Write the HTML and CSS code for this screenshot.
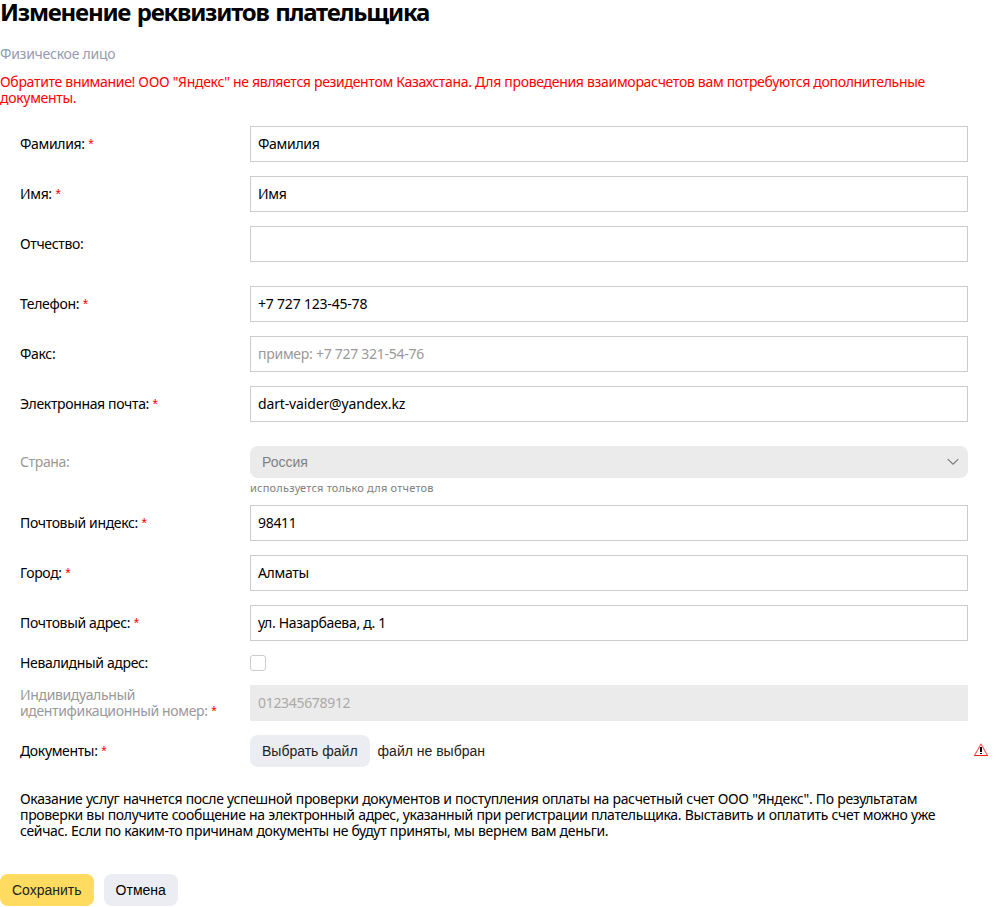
FILE: index.html
```
<!DOCTYPE html>
<html lang="ru">
<head>
<meta charset="utf-8">
<title>Изменение реквизитов плательщика</title>
<link rel="stylesheet" href="styles.css">
</head>
<body>
<h1 class="title"><span>Изменение реквизитов плательщика</span></h1>
<div class="subtitle"><span>Физическое лицо</span></div>
<div class="warning">Обратите внимание! ООО "Яндекс" не является резидентом Казахстана. Для проведения взаиморасчетов вам потребуются дополнительные<br>документы.</div>
<form class="form">
  <div class="group">
    <div class="row"><label class="label"><span>Фамилия:</span> <span class="req">*</span></label><div class="input"><span>Фамилия</span></div></div>
    <div class="row"><label class="label"><span>Имя:</span> <span class="req">*</span></label><div class="input"><span>Имя</span></div></div>
    <div class="row"><label class="label"><span>Отчество:</span></label><div class="input"></div></div>
  </div>
  <div class="group">
    <div class="row"><label class="label"><span>Телефон:</span> <span class="req">*</span></label><div class="input num"><span>+7 727 123-45-78</span></div></div>
    <div class="row"><label class="label"><span>Факс:</span></label><div class="input placeholder"><span>пример: +7 727 321-54-76</span></div></div>
    <div class="row"><label class="label"><span>Электронная почта:</span> <span class="req">*</span></label><div class="input latin"><span>dart-vaider@yandex.kz</span></div></div>
  </div>
  <div class="group address">
    <div class="country">
      <div class="row"><label class="label muted"><span>Страна:</span></label>
        <div class="select"><span>Россия</span><svg class="chevron" width="12" height="8" viewBox="0 0 12 8"><path d="M.7 1.200 6 6.200l5.300-5" fill="none" stroke="#777" stroke-width="1.1"/></svg></div></div>
      <div class="hint"><span>используется только для отчетов</span></div>
    </div>
    <div class="row"><label class="label"><span>Почтовый индекс:</span> <span class="req">*</span></label><div class="input"><span>98411</span></div></div>
    <div class="row"><label class="label"><span>Город:</span> <span class="req">*</span></label><div class="input"><span>Алматы</span></div></div>
    <div class="row"><label class="label"><span>Почтовый адрес:</span> <span class="req">*</span></label><div class="input"><span>ул. Назарбаева, д. 1</span></div></div>
    <div class="row"><label class="label"><span>Невалидный адрес:</span></label><div class="checkbox"></div></div>
    <div class="row"><label class="label muted"><span>Индивидуальный<br>идентификационный номер:</span> <span class="req">*</span></label><div class="input disabled"><span>012345678912</span></div></div>
    <div class="row"><label class="label"><span>Документы:</span> <span class="req">*</span></label>
      <div class="file"><div class="button"><span>Выбрать файл</span></div><span class="filename">файл не выбран</span></div>
      <svg class="alert" width="16" height="14" viewBox="0 0 16 14"><path d="M8 1 1.500 12.500h13z" fill="#fff" stroke="#f55" stroke-width="1.100" stroke-linejoin="round"/><path d="M1.500 12.500h13" stroke="#f21b0c" stroke-width="1"/><path d="M7 4h2v5H7zM7 10h2v1H7z" fill="#000"/></svg></div>
  </div>
  <p class="note">Оказание услуг начнется после успешной проверки документов и поступления оплаты на расчетный счет ООО "Яндекс". По результатам<br>проверки вы получите сообщение на электронный адрес, указанный при регистрации плательщика. Выставить и оплатить счет можно уже<br>сейчас. Если по каким-то причинам документы не будут приняты, мы вернем вам деньги.</p>
</form>
<div class="actions"><div class="button primary"><span>Сохранить</span></div><div class="button"><span>Отмена</span></div></div>
</body>
</html>
```
FILE: styles.css
```
* { box-sizing: border-box; }
body { margin: 0; background: #fff; color: #000; font: 14px/16px "Noto Sans", sans-serif; letter-spacing: -0.32px; white-space: nowrap; }
.title { margin: 0; font-size: 24px; line-height: 24px; font-weight: 700; letter-spacing: -1.22px; word-spacing: 1.5px; }
.subtitle { margin-top: 22px; color: #939cb0; letter-spacing: -0.26px; }
.warning { margin-top: 12px; color: #f00; letter-spacing: -0.31px; }
.form { margin-top: 20px; padding: 0 12px 0 20px; }
.group { display: flex; flex-direction: column; gap: 14px; margin-bottom: 24px; }
.row { display: flex; align-items: center; }
.label { width: 230px; flex: none; letter-spacing: -0.35px; }
.req { color: #f00; font-family: "Liberation Sans", sans-serif; margin-left: 0.3px; }
.muted { color: #999; }
.input { width: 718px; height: 36px; padding: 9px 7px; border: 1px solid #ccc; }
.num { letter-spacing: -0.2px; }
.latin { letter-spacing: -0.15px; }
.placeholder { color: #999; letter-spacing: -0.27px; }
.disabled { background: #ebebeb; border-color: #ebebeb; color: #aaa; }
.select { display: flex; align-items: center; justify-content: space-between; width: 718px; height: 32px; padding: 0 9px 0 12px; border-radius: 8px; background: #ebebeb; color: #808080; font-family: "Liberation Sans", Arial, sans-serif; letter-spacing: 0; }
.country { height: 45px; }
.hint { margin: 2px 0 0 230px; font-size: 11px; letter-spacing: 0.21px; color: #808080; }
.checkbox { width: 16px; height: 16px; border: 1px solid #ccc; border-radius: 3px; }
.file { display: flex; align-items: center; gap: 8px; flex: 1; font-family: "Liberation Sans", Arial, sans-serif; letter-spacing: 0; color: #222; }
.button { display: flex; align-items: center; height: 32px; padding: 0 12px; border-radius: 8px; background: #ecedf2; font-family: "Liberation Sans", Arial, sans-serif; letter-spacing: 0; }
.primary { background: #ffdb60; color: #222; }
.alert { margin: 0 -1px 2px 0; }
.note { margin: 0; letter-spacing: -0.34px; word-spacing: 0.2px; }
.actions { display: flex; gap: 10px; margin-top: 35px; }
```
